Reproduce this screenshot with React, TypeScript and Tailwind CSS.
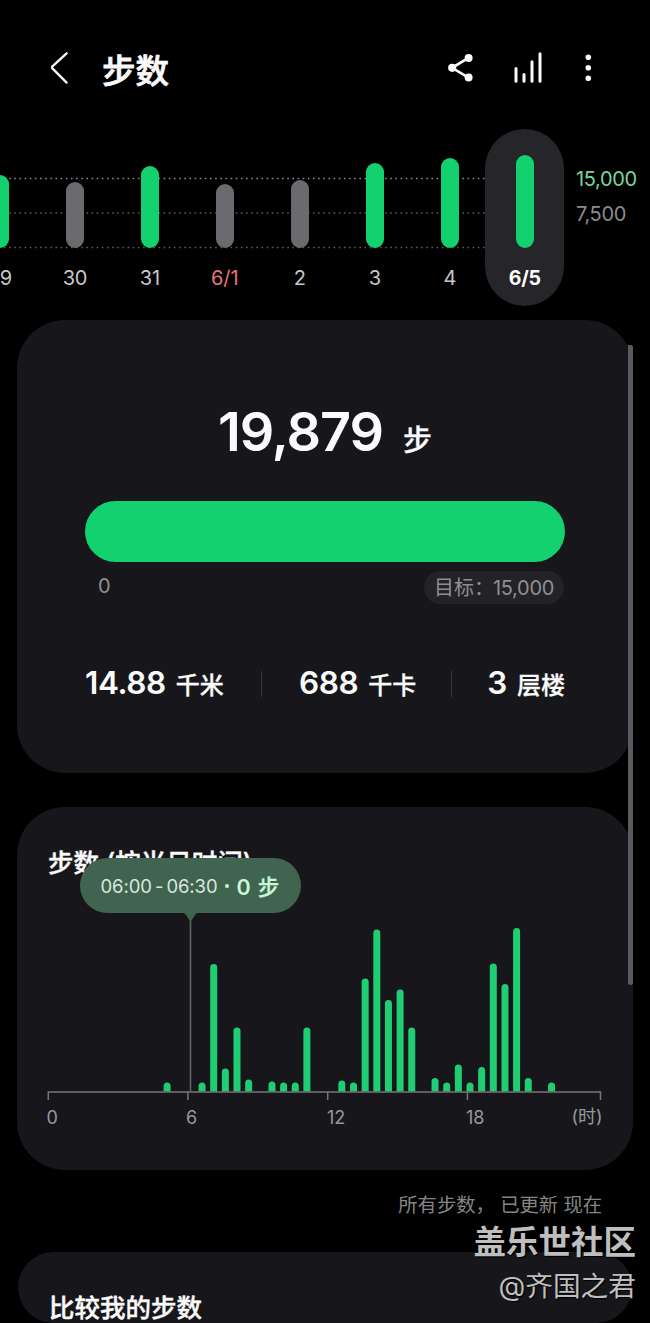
import React from "react";

const days = [
  { label: "29", top: 175, done: true },
  { label: "30", top: 182, done: false },
  { label: "31", top: 166, done: true },
  { label: "6/1", top: 184, done: false, holiday: true },
  { label: "2", top: 180, done: false },
  { label: "3", top: 163, done: true },
  { label: "4", top: 158, done: true },
  { label: "6/5", top: 155, done: true, selected: true },
];

// [half-hour slot, bar height]
const halfHours = [
  [10, 9], [13, 9], [14, 127.5], [15, 23], [16, 64], [17, 12], [19, 10], [20, 9], [21, 9], [22, 64],
  [25, 11], [26, 9], [27, 113], [28, 162], [29, 91.5], [30, 102], [31, 64], [33, 13.5], [34, 9],
  [35, 27], [36, 9], [37, 24.5], [38, 128], [39, 107.5], [40, 163.5], [41, 13.5], [43, 9],
];

function Header() {
  return (
    <header className="flex h-[128px] items-start pt-[48px]">
      <svg className="ml-[48px] h-10 w-6" viewBox="0 0 24 40" fill="none" stroke="#f4f4f4" strokeWidth="2.3" strokeLinecap="round" strokeLinejoin="round">
        <path d="M18.6 5.3 4.4 18.4a1.4 1.4 0 0 0 0 2L18.6 34.6" />
      </svg>
      <h1 className="ml-[30px] w-[344px] pt-px text-[33.5px] font-medium leading-[44px] text-[#fafafa] [-webkit-text-stroke:0.8px_#fafafa]">步数</h1>
      <svg className="h-10 w-8" viewBox="446 48 32 40" fill="#fafafa">
        <path d="M468.5 57.8 452 67.8l16.5 9.8" fill="none" stroke="#fafafa" strokeWidth="2.7" />
        <circle cx="468.6" cy="57.9" r="4" />
        <circle cx="452.2" cy="67.8" r="4.1" />
        <circle cx="468.6" cy="77.6" r="4" />
      </svg>
      <svg className="ml-8 h-10 w-9" viewBox="510 48 36 40" stroke="#fafafa" strokeWidth="3" strokeLinecap="round">
        <path d="M516 68.5V81.3M524 74.5V81.3M532 61.8V81.3M540 53.8V81.3" />
      </svg>
      <svg className="ml-8 h-10 w-5" viewBox="578 48 20 40" fill="#fafafa">
        <circle cx="588.3" cy="57.2" r="2.8" />
        <circle cx="588.3" cy="67.8" r="2.8" />
        <circle cx="588.3" cy="78.3" r="2.8" />
      </svg>
    </header>
  );
}

function WeekChart() {
  return (
    <section className="relative flex h-[192px] overflow-hidden">
      <svg className="absolute left-0 top-0 h-[130px] w-[486px]" viewBox="0 128 486 130" strokeWidth="1.6" strokeDasharray="1.6 3.55">
        <path d="M4 178.5H486" stroke="#8a8a8a" />
        <path d="M4 213H486" stroke="#5c5c5c" />
        <path d="M4 247.5H486" stroke="#5c5c5c" />
      </svg>
      <div className="-ml-[37.7px] flex shrink-0">
        {days.map((d) => (
          <div key={d.label} className="relative flex h-[178px] w-[75px] flex-col items-center">
            {d.selected && <div className="absolute -left-[2px] top-[0.5px] h-[177.5px] w-[79px] rounded-full bg-[#25252a]" />}
            <div className="relative flex h-[120px] items-end">
              <div
                className={d.done ? "w-[17.5px] rounded-full bg-[#13d16f]" : "w-[17.5px] rounded-full bg-[#6b6a6e]"}
                style={{ height: 248 - d.top }}
              />
            </div>
            <div
              className={
                d.selected
                  ? "relative mt-[17px] text-[19.5px] font-bold leading-[26px] tracking-[-0.2px] text-white"
                  : d.holiday
                    ? "relative mt-[17px] text-[20px] leading-[26px] text-[#e87377]"
                    : "relative mt-[17px] text-[20px] leading-[26px] tracking-[-0.3px] text-[#c8c8c8]"
              }
            >
              {d.label}
            </div>
          </div>
        ))}
      </div>
      <div className="ml-[13.7px] mt-[38px] flex flex-col gap-[9px] text-[20px] leading-[26px] tracking-[-0.35px]">
        <span className="text-[#7bd59f]">15,000</span>
        <span className="text-[#8c8c8c]">7,500</span>
      </div>
    </section>
  );
}

function Stat({ value, unit }: { value: string; unit: string }) {
  return (
    <div className="flex items-baseline gap-[10px] whitespace-nowrap text-[#fafafa]">
      <span className="text-[31.5px] font-semibold leading-[40px] tracking-[-0.4px]">{value}</span>
      <span className="text-[24px] font-medium leading-[40px] [-webkit-text-stroke:0.3px_#fafafa]">{unit}</span>
    </div>
  );
}

function SummaryCard() {
  return (
    <section className="ml-[17px] h-[453px] w-[616px] rounded-[48px] bg-[#17171b] px-[68px] pt-[79px]">
      <div className="flex h-[70px] items-baseline justify-center gap-[20px] text-[#fafaff]">
        <span className="text-[54px] font-semibold leading-[66px] tracking-[-1.1px]">19,879</span>
        <span className="text-[29px] font-medium leading-[40px] [-webkit-text-stroke:0.3px_#fafaff]">步</span>
      </div>
      <div className="mt-[32px] h-[61px] w-[480px] rounded-full bg-[#13d16f]" />
      <div className="mt-[9px] flex items-start justify-between pl-[13px] text-[20px] text-[#8f8f93]">
        <span className="leading-[30px]">0</span>
        <span className="mr-px flex h-[33px] w-[140px] items-center justify-center whitespace-nowrap rounded-full bg-[#232327] pt-px">
          目标：<span className="-ml-[1px] tracking-[-0.3px]">15,000</span>
        </span>
      </div>
      <div className="mt-[60px] flex h-[40px] items-center">
        <div className="w-[176px] pt-px"><Stat value="14.88" unit="千米" /></div>
        <i className="h-[26px] w-px bg-[#37373b]" />
        <div className="w-[189px] pl-[37px] pt-px"><Stat value="688" unit="千卡" /></div>
        <i className="h-[26px] w-px bg-[#37373b]" />
        <div className="flex flex-1 justify-end pt-px"><Stat value="3" unit="层楼" /></div>
      </div>
    </section>
  );
}

function HourlyCard() {
  return (
    <section className="relative ml-[17px] mt-[34px] h-[363px] w-[616px] rounded-[48px] bg-[#17171b] pt-[38px]">
      <h2 className="ml-[31px] text-[25.5px] font-medium leading-[36px] text-[#fafafa] [-webkit-text-stroke:0.4px_#fafafa]">步数 (按当日时间)</h2>
      <svg className="mt-[31px] block h-[190px] w-[616px]" viewBox="17 912 616 190">
        {halfHours.map(([slot, h]) => {
          const x = 47.1 + slot * 11.65;
          const top = 1091.5 - h;
          return <path key={slot} fill="#1fce73" d={`M${x} 1091.5V${top + 3.5}a3.5 3.5 0 0 1 7 0V1091.5Z`} />;
        })}
        <path d="M190.5 915V1091" stroke="#586860" strokeWidth="1.6" />
        <path d="M48.3 1100V1092H600.5V1100M187.9 1092V1100M327.7 1092V1100M467.4 1092V1100" fill="none" stroke="#77777a" strokeWidth="1.5" />
      </svg>
      <div className="flex text-[18px] leading-[28px] text-[#98989c]">
        <span className="ml-[29.5px] w-[139.5px] pt-[2px]">0</span>
        <span className="w-[141px] pt-[2px]">6</span>
        <span className="w-[139px] pt-[2px]">12</span>
        <span className="w-[105.5px] pt-[2px]">18</span>
        <span className="pt-px">(时)</span>
      </div>
      <div className="absolute left-[63px] top-[51px] flex h-[55px] w-[220.5px] items-center whitespace-nowrap rounded-full bg-[#406450] pl-[20.5px]">
        <span className="pt-[2px] text-[18.5px] tracking-[-0.1px] text-[#dbe7df] [word-spacing:-2px]">06:00 - 06:30</span>
        <i className="ml-[7px] mr-[8px] size-[4px] rounded-full bg-[#c6f7db]" />
        <span className="pt-[3px] text-[21.5px] font-semibold text-[#c6f7db] [word-spacing:1.5px]">
          0 <span className="font-medium [-webkit-text-stroke:0.3px_#c6f7db]">步</span>
        </span>
        <svg className="absolute left-[102px] top-[54px] h-[10px] w-[17px]" viewBox="0 0 17 10" fill="#406450">
          <path d="M0 0H17Q14.5 1 13 3L8.5 10 4 3Q2.5 1 0 0Z" />
        </svg>
      </div>
    </section>
  );
}

export default function App() {
  return (
    <div className="relative h-[1323px] w-[650px] overflow-hidden bg-black font-['Inter','Noto_Sans_CJK_SC',sans-serif]">
      <Header />
      <WeekChart />
      <SummaryCard />
      <HourlyCard />
      <p className="h-[82px] whitespace-pre pr-[48px] pt-[21px] text-right text-[19.3px] leading-[28px] text-[#858585]">所有步数， 已更新 现在</p>
      <section className="ml-[18px] h-[71px] w-[614px] rounded-full bg-[#17171b] pl-[31px] pt-[38px]">
        <h2 className="text-[25.5px] font-medium leading-[36px] text-[#fafafa] [-webkit-text-stroke:0.4px_#fafafa]">比较我的步数</h2>
      </section>
      <div className="absolute right-[14px] top-[1220px] flex flex-col items-end text-[#bebebe] [text-shadow:1px_1px_1px_#000]">
        <span className="text-[32.5px] font-bold leading-[46px]">盖乐世社区</span>
        <span className="text-[27.7px] leading-[40px]">@齐国之君</span>
      </div>
      <div className="absolute left-[628px] top-[345px] h-[640px] w-[5px] rounded-b-full rounded-tr-full bg-[#5b5b5f]" />
    </div>
  );
}
